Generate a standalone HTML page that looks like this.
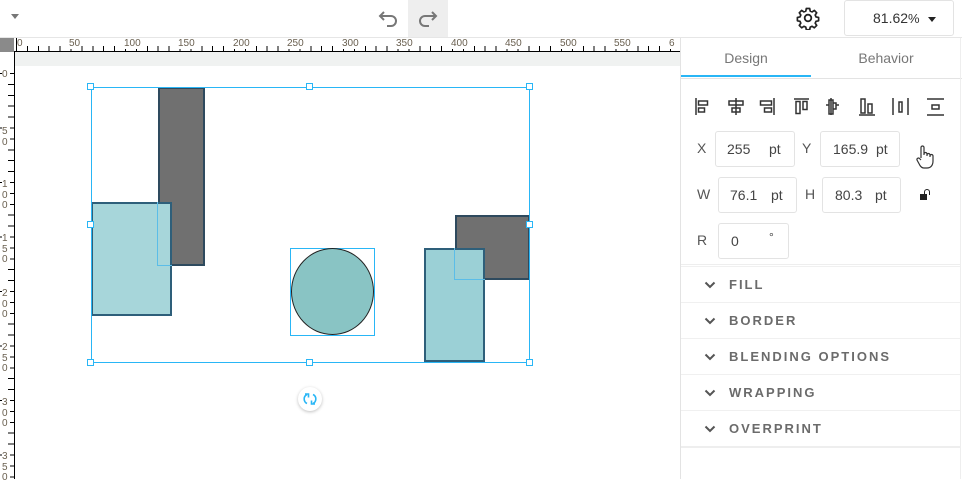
<!DOCTYPE html>
<html><head><meta charset="utf-8"><style>
*{box-sizing:border-box;margin:0;padding:0}
body{width:962px;height:479px;overflow:hidden;background:#fff;font-family:"Liberation Sans",Arial,sans-serif;position:relative}
.a{position:absolute}
.topbar{left:0;top:0;width:962px;height:38px;border-bottom:1px solid #e6e6e6;background:#fff}
.ruler-top{left:14px;top:38px;width:666px;height:14px;border-bottom:1px solid #000;
 background:
 repeating-linear-gradient(to right,#000 0 1px,transparent 1px 54.5px) 2px 0/100% 100% no-repeat,
 repeating-linear-gradient(to right,#000 0 1px,transparent 1px 10.9px) 2px 8px/100% 6px no-repeat;}
.ruler-left{left:0;top:52px;width:15px;height:427px;border-right:1px solid #000;
 background:
 repeating-linear-gradient(to bottom,#000 0 1px,transparent 1px 54.5px) 0 21px/100% 100% no-repeat,
 repeating-linear-gradient(to bottom,#000 0 1px,transparent 1px 10.9px) 8px 21px/6px 100% no-repeat;}
.corner{left:0;top:38px;width:14px;height:14px;background:#8a8a8a}
.tl{font-size:10px;color:#6a6050;top:38px;line-height:11px;background:#fff;padding-right:1px}
.ll{font-size:10px;color:#6a6050;left:2px;line-height:10.5px;width:8px;background:#fff}
.panel{left:680px;top:38px;width:282px;height:441px;border-left:1px solid #e3e3e3;background:#fff}
.tab{top:0;height:40px;line-height:40px;font-size:14px;color:#777;text-align:center}
.inp{border:1px solid #e3e3e3;border-radius:3px;height:36px;font-size:14px;color:#444;line-height:34px}
.lbl{font-size:14px;color:#555}
.sec{left:0;width:280px;height:35px;border-top:1px solid #f0f0f0;font-size:13px;font-weight:bold;letter-spacing:2px;color:#6b6b6b;line-height:35px}
.sec svg{position:absolute;left:23px;top:14px}
.h{width:7px;height:7px;border:1px solid #29b6f6;background:#fff}
</style></head><body>
<div class="a topbar"></div>
<div class="a" style="left:11px;top:14px;width:0;height:0;border-left:4px solid transparent;border-right:4px solid transparent;border-top:5px solid #777"></div>
<svg class="a" style="left:376px;top:6px" width="24" height="24" viewBox="0 0 24 24"><path d="M8 6 L4 10 L8 14 M4 10 H15 a5 5 0 0 1 0 10 H11" fill="none" stroke="#777" stroke-width="2"/></svg>
<div class="a" style="left:408px;top:0;width:40px;height:37px;background:#eee"></div>
<svg class="a" style="left:416px;top:6px" width="24" height="24" viewBox="0 0 24 24"><path d="M16 6 L20 10 L16 14 M20 10 H9 a5 5 0 0 0 0 10 H13" fill="none" stroke="#777" stroke-width="2"/></svg>
<svg class="a" style="left:796px;top:6px" width="24" height="24" viewBox="0 0 24 24"><circle cx="12" cy="12" r="3.3" fill="none" stroke="#222" stroke-width="1.8"/><path d="M10.3 2.5h3.4l.5 2.6 1.9.8 2.2-1.5 2.4 2.4-1.5 2.2.8 1.9 2.6.5v3.4l-2.6.5-.8 1.9 1.5 2.2-2.4 2.4-2.2-1.5-1.9.8-.5 2.6h-3.4l-.5-2.6-1.9-.8-2.2 1.5-2.4-2.4 1.5-2.2-.8-1.9-2.6-.5v-3.4l2.6-.5.8-1.9-1.5-2.2 2.4-2.4 2.2 1.5 1.9-.8z" fill="none" stroke="#222" stroke-width="1.7" stroke-linejoin="round"/></svg>
<div class="a" style="left:844px;top:0;width:110px;height:36px;border:1px solid #e3e3e3;border-radius:3px;font-size:14px;color:#333;line-height:35px;padding-left:28px">81.62<span style="font-size:13px">%</span></div>
<div class="a" style="left:928px;top:17px;width:0;height:0;border-left:4px solid transparent;border-right:4px solid transparent;border-top:5px solid #222"></div>

<div class="a ruler-top"></div>
<div class="a ruler-left"></div>
<div class="a corner"></div>
<div class="a tl" style="left:17px">0</div>
<div class="a tl" style="left:69px">50</div>
<div class="a tl" style="left:124px">100</div>
<div class="a tl" style="left:178px">150</div>
<div class="a tl" style="left:233px">200</div>
<div class="a tl" style="left:287px">250</div>
<div class="a tl" style="left:342px">300</div>
<div class="a tl" style="left:396px">350</div>
<div class="a tl" style="left:451px">400</div>
<div class="a tl" style="left:505px">450</div>
<div class="a tl" style="left:560px">500</div>
<div class="a tl" style="left:614px">550</div>
<div class="a tl" style="left:669px">6</div>
<div class="a ll" style="top:70px">0</div>
<div class="a ll" style="top:127px">5<br>0</div>
<div class="a ll" style="top:180px">1<br>0<br>0</div>
<div class="a ll" style="top:234px">1<br>5<br>0</div>
<div class="a ll" style="top:289px">2<br>0<br>0</div>
<div class="a ll" style="top:343px">2<br>5<br>0</div>
<div class="a ll" style="top:398px">3<br>0<br>0</div>
<div class="a ll" style="top:452px">3<br>5<br>0</div>

<div class="a" style="left:15px;top:52px;width:665px;height:14px;background:#f0f2f1"></div>

<!-- shapes -->
<div class="a" style="left:158px;top:87px;width:47px;height:179px;background:#707070;border:2px solid #2e4a5e"></div>
<div class="a" style="left:91px;top:202px;width:81px;height:114px;background:#a7d6da;border:2px solid #2e5f7a"></div>
<div class="a" style="left:157px;top:202px;width:1px;height:64px;background:#5bbde8"></div>
<div class="a" style="left:157px;top:265px;width:15px;height:1px;background:#5bbde8"></div>
<div class="a" style="left:290px;top:248px;width:85px;height:88px;border:1px solid #29b6f6"></div>
<div class="a" style="left:291px;top:248px;width:83px;height:87px;border-radius:50%;background:#89c4c4;border:1px solid #222"></div>
<div class="a" style="left:455px;top:215px;width:75px;height:65px;background:#707070;border:2px solid #2e4a5e"></div>
<div class="a" style="left:424px;top:248px;width:61px;height:114px;background:#9bd0d6;border:2px solid #2e5f7a"></div>
<div class="a" style="left:454px;top:248px;width:1px;height:32px;background:#5bbde8"></div>
<div class="a" style="left:454px;top:279px;width:31px;height:1px;background:#5bbde8"></div>
<div class="a" style="left:91px;top:87px;width:439px;height:276px;border:1px solid #29b6f6"></div>
<div class="a h" style="left:87px;top:83px"></div><div class="a h" style="left:306px;top:83px"></div><div class="a h" style="left:526px;top:83px"></div>
<div class="a h" style="left:87px;top:221px"></div><div class="a h" style="left:526px;top:221px"></div>
<div class="a h" style="left:87px;top:359px"></div><div class="a h" style="left:306px;top:359px"></div><div class="a h" style="left:526px;top:359px"></div>
<div class="a" style="left:298px;top:387px;width:24px;height:24px;border-radius:50%;background:#fff;box-shadow:0 1px 3px rgba(0,0,0,.25)"></div>
<svg class="a" style="left:302px;top:391px" width="16" height="16" viewBox="0 0 16 16"><path d="M5 3.5A5 5 0 0 0 5 12.5M11 3.5A5 5 0 0 1 11 12.5" fill="none" stroke="#29b6f6" stroke-width="1.6"/><path d="M3 3h3.5v3.5M13 13H9.5V9.5" fill="none" stroke="#29b6f6" stroke-width="1.6"/></svg>

<!-- panel -->
<div class="a panel">
 <div class="a tab" style="left:0;width:130px">Design</div>
 <div class="a tab" style="left:130px;width:150px">Behavior</div>
 <div class="a" style="left:0;top:37px;width:130px;height:2px;background:#29b6f6"></div>
 <div class="a" style="left:0;top:40px;width:282px;height:1px;background:#e3e3e3"></div>
 <svg class="a" style="left:12px;top:58px" width="265" height="22" viewBox="0 0 265 22" fill="none" stroke="#333" stroke-width="1.5">
  <path d="M3 2v17M5.5 5h9v4h-9zM5.5 12h6v4h-6z"/>
  <path d="M43 2v17M36 5h14v4H36zM39 12h8v4h-8z"/>
  <path d="M81 2v17M67.5 5h11v4h-11zM71.5 12h7v4h-7z"/>
  <path d="M101 3h15M103 5.5v12h4v-12zM110 5.5v8h4v-8z"/>
  <path d="M133 9h3M143 9h3M138 2v17M136 4h4v14h-4zM140 7h3v6h-3z"/>
  <path d="M166 19h16M168 3v14h4V3zM175 8v9h4V8z"/>
  <path d="M200 2v17M215 2v17M206 6h3v10h-3z"/>
  <path d="M234 3h17M234 19h17M239 9h7v4h-7z"/>
 </svg>
 <div class="a lbl" style="left:16px;top:102px">X</div>
 <div class="a inp" style="left:34px;top:93px;width:80px;padding-left:11px">255<span style="position:absolute;left:53px">pt</span></div>
 <div class="a lbl" style="left:121px;top:102px">Y</div>
 <div class="a inp" style="left:139px;top:93px;width:80px;padding-left:12px">165.9<span style="position:absolute;left:55px">pt</span></div>
 <svg class="a" style="left:234px;top:106px" width="20" height="26" viewBox="0 0 20 26"><path d="M6 14V3.5a1.5 1.5 0 0 1 3 0V11M9 10a1.5 1.5 0 0 1 3 0v2M12 11a1.5 1.5 0 0 1 3 0v2M15 12a1.5 1.5 0 0 1 3 0v5c0 4-2 7-6 7H9c-2 0-3-1-4-2.5L2 16a1.5 1.5 0 0 1 2.5-1.5L6 16" fill="#fff" stroke="#333" stroke-width="1.2" stroke-linejoin="round"/></svg>
 <div class="a lbl" style="left:16px;top:148px">W</div>
 <div class="a inp" style="left:37px;top:139px;width:79px;padding-left:11px">76.1<span style="position:absolute;left:52px">pt</span></div>
 <div class="a lbl" style="left:124px;top:148px">H</div>
 <div class="a inp" style="left:141px;top:139px;width:79px;padding-left:12px">80.3<span style="position:absolute;left:52px">pt</span></div>
 <div class="a" style="left:239px;top:156px;width:7px;height:6px;background:#222"></div>
 <div class="a" style="left:241px;top:151px;width:6px;height:6px;border:1.5px solid #222;border-bottom:none;border-radius:3px 3px 0 0;transform:translateX(2px)"></div>
 <div class="a lbl" style="left:16px;top:194px">R</div>
 <div class="a inp" style="left:37px;top:185px;width:71px;padding-left:12px">0<span style="position:absolute;left:50px;top:-4px;font-size:12px">°</span></div>
 <div class="a" style="left:0;top:226px;width:280px;height:1px;background:#eee"></div>
 <div class="a sec" style="top:228px"><svg width="12" height="8" viewBox="0 0 12 8"><path d="M1.5 1.5l4.5 4.5 4.5-4.5" fill="none" stroke="#555" stroke-width="2"/></svg><span style="position:absolute;left:48px">FILL</span></div>
 <div class="a sec" style="top:264px"><svg width="12" height="8" viewBox="0 0 12 8"><path d="M1.5 1.5l4.5 4.5 4.5-4.5" fill="none" stroke="#555" stroke-width="2"/></svg><span style="position:absolute;left:48px">BORDER</span></div>
 <div class="a sec" style="top:300px"><svg width="12" height="8" viewBox="0 0 12 8"><path d="M1.5 1.5l4.5 4.5 4.5-4.5" fill="none" stroke="#555" stroke-width="2"/></svg><span style="position:absolute;left:48px">BLENDING OPTIONS</span></div>
 <div class="a sec" style="top:336px"><svg width="12" height="8" viewBox="0 0 12 8"><path d="M1.5 1.5l4.5 4.5 4.5-4.5" fill="none" stroke="#555" stroke-width="2"/></svg><span style="position:absolute;left:48px">WRAPPING</span></div>
 <div class="a sec" style="top:372px"><svg width="12" height="8" viewBox="0 0 12 8"><path d="M1.5 1.5l4.5 4.5 4.5-4.5" fill="none" stroke="#555" stroke-width="2"/></svg><span style="position:absolute;left:48px">OVERPRINT</span></div>
 <div class="a" style="left:0;top:408px;width:280px;height:2px;background:#eee"></div>
 <div class="a" style="left:279px;top:0;width:1px;height:441px;background:#eee"></div>
</div>
</body></html>
